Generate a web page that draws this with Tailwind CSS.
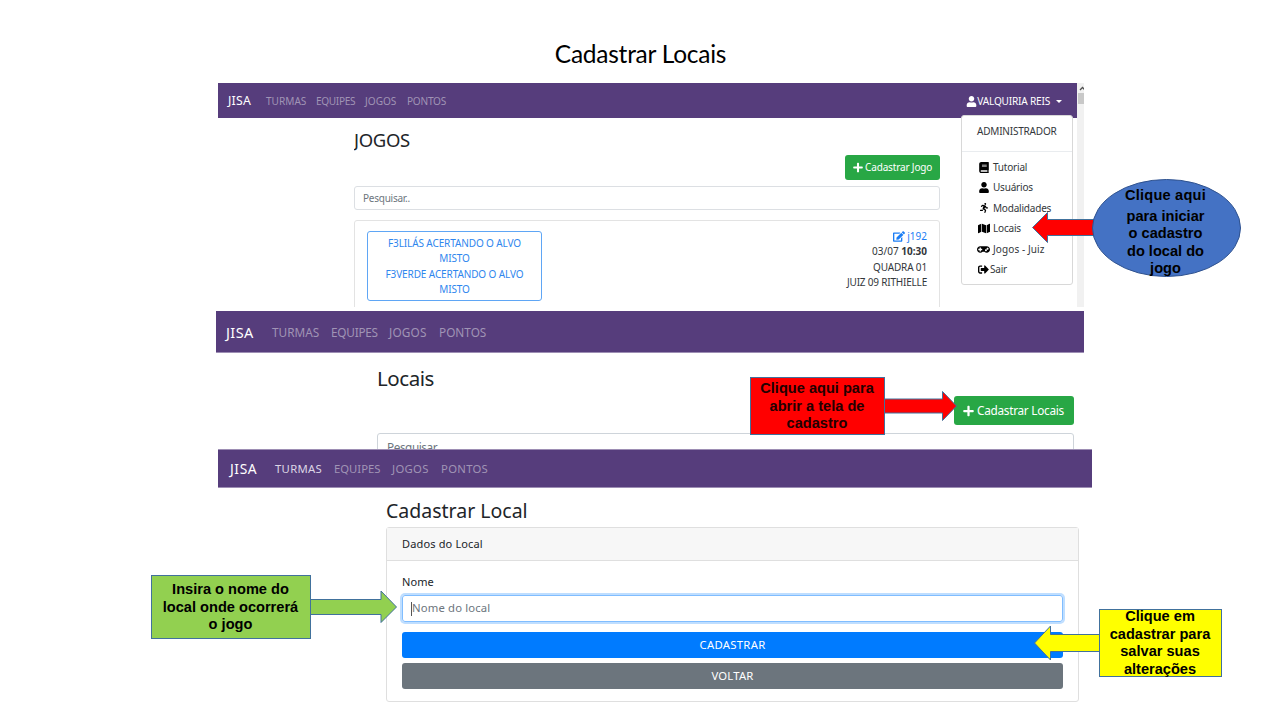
<!DOCTYPE html>
<html lang="pt-BR">
<head>
<meta charset="utf-8">
<title>Cadastrar Locais</title>
<script src="https://cdn.jsdelivr.net/npm/@tailwindcss/browser@4"></script>
</head>
<body class="bg-white font-['Noto_Sans',sans-serif] text-[#212529]">
<svg class="hidden">
  <symbol id="user" viewBox="0 0 448 512"><path d="M224 256c70.7 0 128-57.3 128-128S294.7 0 224 0 96 57.3 96 128s57.3 128 128 128zm89.6 32h-16.7c-22.2 10.2-46.9 16-72.9 16s-50.6-5.8-72.9-16h-16.7C60.2 288 0 348.2 0 422.4V464c0 26.5 21.5 48 48 48h352c26.5 0 48-21.5 48-48v-41.6c0-74.2-60.2-134.4-134.4-134.4z"/></symbol>
  <symbol id="plus" viewBox="0 0 448 512"><path d="M416 208H272V64c0-17.67-14.33-32-32-32h-32c-17.67 0-32 14.33-32 32v144H32c-17.67 0-32 14.33-32 32v32c0 17.67 14.33 32 32 32h144v144c0 17.67 14.33 32 32 32h32c17.67 0 32-14.33 32-32V304h144c17.67 0 32-14.33 32-32v-32c0-17.67-14.33-32-32-32z"/></symbol>
  <symbol id="book" viewBox="0 0 448 512"><path d="M448 360V24c0-13.3-10.7-24-24-24H96C43 0 0 43 0 96v320c0 53 43 96 96 96h328c13.3 0 24-10.7 24-24v-16c0-7.5-3.5-14.3-8.9-18.7-4.2-15.4-4.2-59.3 0-74.7 5.4-4.3 8.9-11.1 8.9-18.6zM128 134c0-3.3 2.7-6 6-6h212c3.3 0 6 2.7 6 6v20c0 3.3-2.7 6-6 6H134c-3.3 0-6-2.7-6-6v-20zm0 64c0-3.3 2.7-6 6-6h212c3.3 0 6 2.7 6 6v20c0 3.3-2.7 6-6 6H134c-3.3 0-6-2.7-6-6v-20zm253.4 250H96c-17.7 0-32-14.3-32-32 0-17.6 14.4-32 32-32h285.4c-1.9 17.1-1.9 46.9 0 64z"/></symbol>
  <symbol id="run" viewBox="0 0 416 512"><path d="M272 96c26.51 0 48-21.49 48-48S298.51 0 272 0s-48 21.49-48 48 21.49 48 48 48zM113.69 317.47l-14.8 34.52H32c-17.67 0-32 14.33-32 32s14.33 32 32 32h77.45c19.25 0 36.58-11.44 44.11-29.09l8.79-20.52-10.67-6.3c-17.32-10.23-30.06-25.37-37.99-42.61zM384 223.99h-44.03l-26.06-53.25c-12.5-25.55-35.45-44.23-61.78-50.94l-71.08-21.14c-28.3-6.8-57.77-.55-80.84 17.14l-39.67 30.41c-14.03 10.75-16.69 30.83-5.92 44.86s30.84 16.66 44.86 5.92l39.69-30.41c7.67-5.89 17.44-8 25.27-6.14l14.7 4.37-37.46 87.39c-12.62 29.48-1.31 64.01 26.3 80.31l84.98 50.17-27.47 87.73c-5.28 16.86 4.11 34.82 20.97 40.09 3.19 1 6.41 1.48 9.58 1.48 13.61 0 26.23-8.77 30.52-22.45l31.64-101.06c5.91-20.77-2.89-43.08-21.64-54.39l-61.24-36.14 31.31-78.28 20.27 41.43c8 16.34 24.92 26.89 43.11 26.89H384c17.67 0 32-14.33 32-32s-14.33-31.99-32-31.99z"/></symbol>
  <symbol id="map" viewBox="0 0 576 512"><path d="M0 117.66v346.32c0 11.32 11.43 19.06 21.94 14.86L160 416V32L20.12 87.95A32.006 32.006 0 0 0 0 117.66zM192 416l192 64V96L192 32v384zM554.06 33.16L416 96v384l139.88-55.95A31.996 31.996 0 0 0 576 394.34V48.02c0-11.32-11.43-19.06-21.94-14.86z"/></symbol>
  <symbol id="gamepad" viewBox="0 0 640 512"><path d="M480 96H160C71.6 96 0 167.6 0 256s71.6 160 160 160c44.8 0 85.2-18.4 114.2-48h91.5c29 29.6 69.5 48 114.2 48 88.4 0 160-71.6 160-160S568.4 96 480 96zM256 276c0 6.6-5.4 12-12 12h-52v52c0 6.6-5.4 12-12 12h-40c-6.6 0-12-5.4-12-12v-52H76c-6.6 0-12-5.4-12-12v-40c0-6.6 5.4-12 12-12h52v-52c0-6.6 5.4-12 12-12h40c6.6 0 12 5.4 12 12v52h52c6.6 0 12 5.4 12 12v40zm184 68c-26.5 0-48-21.5-48-48s21.5-48 48-48 48 21.5 48 48-21.5 48-48 48zm80-80c-26.5 0-48-21.5-48-48s21.5-48 48-48 48 21.5 48 48-21.5 48-48 48z"/></symbol>
  <symbol id="signout" viewBox="0 0 512 512"><path d="M497 273L329 441c-15 15-41 4.5-41-17v-96H152c-13.3 0-24-10.7-24-24v-96c0-13.3 10.7-24 24-24h136V88c0-21.4 25.9-32 41-17l168 168c9.3 9.4 9.3 24.6 0 34zM192 436v-40c0-6.6-5.4-12-12-12H96c-17.7 0-32-14.3-32-32V160c0-17.7 14.3-32 32-32h84c6.6 0 12-5.4 12-12V76c0-6.6-5.4-12-12-12H96c-53 0-96 43-96 96v192c0 53 43 96 96 96h84c6.6 0 12-5.4 12-12z"/></symbol>
  <symbol id="edit" viewBox="0 0 576 512"><path d="M402.6 83.2l90.2 90.2c3.8 3.8 3.8 10 0 13.8L274.4 405.6l-92.8 10.3c-12.4 1.4-22.9-9.1-21.5-21.5l10.3-92.8L388.8 83.2c3.8-3.8 10-3.8 13.8 0zm162-22.9l-48.8-48.8c-15.2-15.2-39.9-15.2-55.2 0l-35.4 35.4c-3.8 3.8-3.8 10 0 13.8l90.2 90.2c3.8 3.8 10 3.8 13.8 0l35.4-35.4c15.2-15.3 15.2-40 0-55.2zM384 346.2V448H64V128h229.8c3.2 0 6.2-1.3 8.5-3.5l40-40c7.6-7.6 2.1-20.5-8.5-20.5H48C21.5 64 0 85.5 0 112v352c0 26.5 21.5 48 48 48h352c26.5 0 48-21.5 48-48V306.2c0-10.7-12.9-16-20.5-8.5l-40 40c-2.2 2.3-3.5 5.3-3.5 8.5z"/></symbol>
</svg>

<main class="relative h-[720px] w-[1280px] overflow-hidden whitespace-nowrap">
  <h1 class="flex h-[83px] items-center justify-center pt-[25px] pl-px font-['Lato',sans-serif] text-[24.5px] leading-none tracking-[-0.25px] text-black">Cadastrar Locais</h1>

  <!-- Jogos -->
  <section class="ml-[218px] flex h-[228px] w-[866px]">
    <div class="relative h-[224px] w-[859px]">
      <nav class="flex h-[35px] items-center bg-[#563d7c] pt-[2px] pl-[10px] text-[10.1px] text-[#a094b5]">
        <b class="w-[38px] text-[12.3px] font-normal tracking-[0.2px] text-white">JISA</b>
        <a class="w-[50px]">TURMAS</a>
        <a class="w-[49px] tracking-[-0.35px]">EQUIPES</a>
        <a class="w-[42px]">JOGOS</a>
        <a class="tracking-[-0.25px]">PONTOS</a>
        <div class="ml-auto flex items-center pr-[15px] text-white">
          <svg class="h-[11px] w-[11px]" fill="currentColor"><use href="#user"/></svg>
          <span class="tracking-[-0.2px]">VALQUIRIA REIS</span>
          <i class="ml-[6px] border-x-[3px] border-t-[3px] border-x-transparent border-t-white"></i>
        </div>
      </nav>
      <div class="ml-[136px] flex h-[189px] w-[586px] flex-col overflow-hidden">
        <h2 class="mt-[10px] h-[24px] shrink-0 text-[18.5px] leading-[24px] tracking-[-0.35px]">JOGOS</h2>
        <button class="mt-[3px] flex h-[25px] w-[95px] shrink-0 items-center self-end rounded-[3px] bg-[#28a745] pl-[8px] text-[10px] tracking-[-0.15px] text-white">
          <svg class="mr-[2px] h-[11px] w-[10px]" fill="currentColor"><use href="#plus"/></svg>Cadastrar Jogo</button>
        <div class="mt-[6px] flex h-[24px] shrink-0 items-center rounded-[3px] border border-[#dcdfe3] pl-[8px] text-[10px] tracking-[-0.25px] text-[#6c757d]">Pesquisar..</div>
        <div class="mt-[10px] flex h-[120px] shrink-0 items-start justify-between rounded-[3px] border border-[#e3e3e3] pt-[10px] pr-[12px] pl-[12px]">
          <div class="flex h-[70px] w-[175px] flex-col items-center rounded-[3px] border border-[#5fa6f5] pt-[4px] text-[10px] leading-[15.4px] tracking-[-0.11px] text-[#2f86ee]">
            <span>F3LILÁS ACERTANDO O ALVO</span><span>MISTO</span><span>F3VERDE ACERTANDO O ALVO</span><span>MISTO</span>
          </div>
          <div class="-mt-[2px] flex flex-col items-end text-[10px] leading-[15.4px] text-[#33373b]">
            <a class="flex items-center text-[#1a7df5]"><svg class="mr-[2px] h-[11px] w-[12px]" fill="currentColor"><use href="#edit"/></svg>j192</a>
            <span>03/07 <b>10:30</b></span><span class="tracking-[-0.15px]">QUADRA 01</span><span class="tracking-[-0.2px]">JUIZ 09 RITHIELLE</span>
          </div>
        </div>
      </div>
      <aside class="absolute top-[32px] left-[743px] flex h-[170px] w-[112px] flex-col rounded-[3px] border border-[#d8d8d8] bg-white text-[10px] tracking-[-0.2px] text-[#33373b]">
        <div class="flex h-[36px] items-center border-b border-[#e9ecef] pb-[5px] pl-[15px]">ADMINISTRADOR</div>
        <ul class="flex flex-col pt-[5px] pl-[16px]">
          <li class="flex h-[20.5px] items-center"><svg class="mr-[3px] h-[11px] w-[12px]"><use href="#book"/></svg>Tutorial</li>
          <li class="flex h-[20.5px] items-center"><svg class="mr-[3px] h-[11px] w-[12px]"><use href="#user"/></svg>Usuários</li>
          <li class="flex h-[20.5px] items-center"><svg class="mr-[3px] h-[10px] w-[12px]"><use href="#run"/></svg>Modalidades</li>
          <li class="flex h-[20.5px] items-center"><svg class="mr-[3px] h-[11px] w-[12px]"><use href="#map"/></svg>Locais</li>
          <li class="flex h-[20.5px] items-center tracking-[0.1px]"><svg class="-ml-px mr-[3px] h-[11px] w-[13px]"><use href="#gamepad"/></svg>Jogos - Juiz</li>
          <li class="flex h-[20.5px] items-center"><svg class="mr-[1px] h-[11px] w-[11px]"><use href="#signout"/></svg>Sair</li>
        </ul>
      </aside>
    </div>
    <div class="flex h-[224px] w-[7px] flex-col bg-[#f1f1f1]">
      <svg class="h-[10px] w-[7px]" fill="none" stroke="#505050" stroke-width="1.3"><path d="M3 7 5.5 4.5 8 7"/></svg>
      <i class="ml-[1px] h-[11px] bg-[#c8c8c8]"></i>
    </div>
  </section>

  <!-- Locais -->
  <section class="ml-[216px] h-[138px] w-[868px] overflow-hidden">
    <nav class="flex h-[42px] items-center border-b border-[#9d8eb4] bg-[#563d7c] pt-[2px] pl-[10px] text-[11.8px] text-[#a094b5]">
      <b class="w-[46px] text-[14.5px] font-normal tracking-[0.4px] text-white">JISA</b>
      <a class="w-[59px]">TURMAS</a>
      <a class="w-[58px] tracking-[-0.25px]">EQUIPES</a>
      <a class="w-[50px] tracking-[0.2px]">JOGOS</a>
      <a>PONTOS</a>
    </nav>
    <div class="ml-[161px] flex w-[697px] flex-col">
      <h2 class="mt-[10px] h-[30px] text-[20.5px] leading-[30px] tracking-[-0.45px]">Locais</h2>
      <button class="mt-[3px] flex h-[29px] w-[120px] items-center self-end rounded-[3px] bg-[#28a745] pl-[9px] text-[11.8px] tracking-[-0.28px] text-white">
        <svg class="mr-[3px] h-[12px] w-[11px]" fill="currentColor"><use href="#plus"/></svg>Cadastrar Locais</button>
      <div class="mt-[8px] flex h-[29px] items-center rounded-[3px] border border-[#ced4da] pl-[9px] text-[11.8px] tracking-[-0.45px] text-[#6c757d]">Pesquisar</div>
    </div>
  </section>

  <!-- Cadastrar Local -->
  <section class="ml-[218px] w-[874px]">
    <nav class="flex h-[39px] items-center border-y border-[#9d8eb4] bg-[#563d7c] pt-[2px] pl-[12px] text-[11.3px] tracking-[0.3px] text-[#a094b5]">
      <b class="w-[45px] text-[13.8px] font-normal tracking-[0.6px] text-white">JISA</b>
      <a class="w-[59px] text-[#dcd6e5]">TURMAS</a>
      <a class="w-[58px] tracking-[0px]">EQUIPES</a>
      <a class="w-[49px]">JOGOS</a>
      <a>PONTOS</a>
    </nav>
    <div class="ml-[168px] w-[693px]">
      <h2 class="mt-[8px] h-[30px] text-[19.5px] leading-[30px]">Cadastrar Local</h2>
      <div class="mt-[1px] flex h-[175px] flex-col rounded-[3px] border border-[#dfdfdf] text-[11px]">
        <div class="flex h-[33px] items-center border-b border-[#dfdfdf] bg-[#f7f7f7] pl-[15px] tracking-[0.15px]">Dados do Local</div>
        <div class="flex flex-col px-[15px] pt-[12px]">
          <label class="h-[18px] leading-[18px] tracking-[0.1px]">Nome</label>
          <div class="mt-[4px] flex h-[27px] items-center rounded-[3px] border border-[#80bdff] pl-[8px] text-[11.3px] tracking-[0.15px] text-[#6c757d] ring-2 ring-[#bfdeff]"><i class="h-[14px] w-px bg-[#555]"></i>Nome do local</div>
          <button class="mt-[10px] h-[26px] rounded-[3px] bg-[#007bff] text-[11.3px] tracking-[0.3px] text-white">CADASTRAR</button>
          <button class="mt-[5px] h-[26px] rounded-[3px] bg-[#6c757d] text-[11.3px] tracking-[0.2px] text-white">VOLTAR</button>
        </div>
      </div>
    </div>
  </section>

  <!-- Callouts -->
  <svg class="absolute top-0 left-0 h-[720px] w-[1280px]" stroke="#41719c" stroke-width="1">
    <path fill="#f00" d="M1097 219.5H1047.5V212.5L1032.5 227.5 1047.5 242.5V235.5H1097z"/>
    <path fill="#f00" d="M884 399H942.5V391.5L956.5 406 942.5 420.5V413H884z"/>
    <path fill="#92d050" d="M310 599.5H381V591L396.5 607 381 622.5V614.5H310z"/>
    <path fill="#ff0" d="M1100 634.5H1050.5V626L1034.5 643 1050.5 660V651.5H1100z"/>
    <ellipse fill="#4472c4" stroke="#2f528f" cx="1166.5" cy="228" rx="74" ry="48.5"/>
  </svg>
  <div class="absolute top-[187px] left-[1091px] flex w-[149px] flex-col items-center font-['Liberation_Sans',sans-serif] text-[14.6px] leading-[17.6px] font-bold text-black">
    <span class="mb-[3px] tracking-[0.2px]">Clique aqui</span><span>para iniciar</span><span>o cadastro</span><span>do local do</span><span>jogo</span>
  </div>
  <div class="absolute top-[377px] left-[750px] flex h-[58px] w-[135px] flex-col items-center border border-[#41719c] bg-[#f00] pt-[2px] pr-px font-['Liberation_Sans',sans-serif] text-[14.6px] leading-[17.6px] font-bold text-[#200]">
    <span>Clique aqui para</span><span>abrir a tela de</span><span>cadastro</span>
  </div>
  <div class="absolute top-[575px] left-[151px] flex h-[64px] w-[160px] flex-col items-center border border-[#41719c] bg-[#92d050] pt-[5px] pr-px font-['Liberation_Sans',sans-serif] text-[14.6px] leading-[17.6px] font-bold text-black">
    <span>Insira o nome do</span><span>local onde ocorrerá</span><span>o jogo</span>
  </div>
  <div class="absolute top-[609px] left-[1099px] flex h-[68px] w-[123px] flex-col items-center border border-[#41719c] bg-[#ff0] pr-px font-['Liberation_Sans',sans-serif] text-[14.6px] leading-[17.6px] font-bold text-black">
    <span class="-mt-[2px]">Clique em</span><span>cadastrar para</span><span>salvar suas</span><span>alterações</span>
  </div>
</main>
</body>
</html>
